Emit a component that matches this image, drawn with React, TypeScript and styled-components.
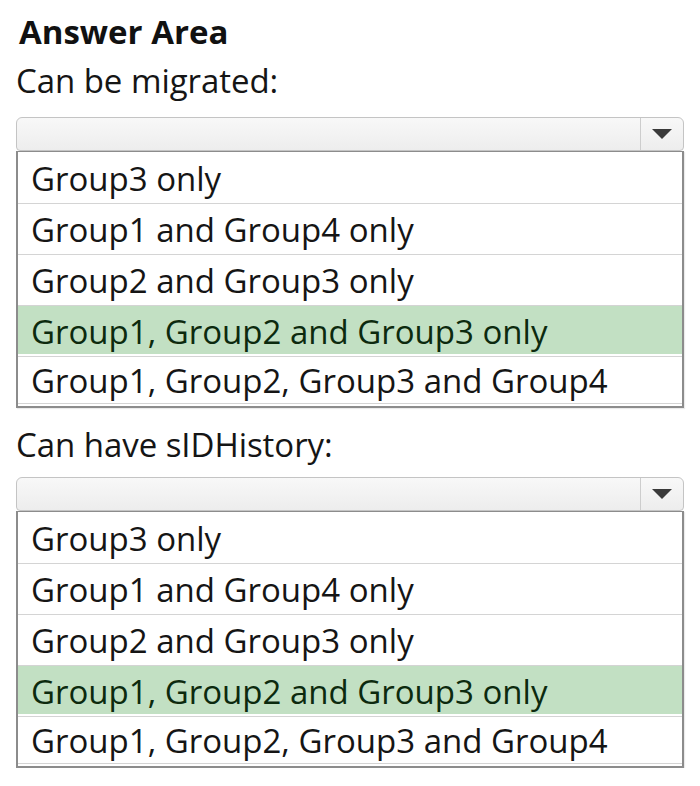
import React from "react";
import styled, { createGlobalStyle } from "styled-components";

const Global = createGlobalStyle`
  html, body {
    margin: 0;
    padding: 0;
    background: #ffffff;
  }
  body {
    font-family: "Open Sans", "Noto Sans", "Liberation Sans", sans-serif;
    color: #151515;
  }
`;

const Page = styled.div`
  width: 700px;
  padding: 12px 16px 0 16px;
  box-sizing: border-box;
`;

const Title = styled.h1`
  margin: 0 0 0 3px;
  font-size: 33px;
  line-height: 40px;
  font-weight: 700;
  color: #111;
  letter-spacing: 0;
`;

const Label = styled.div<{ $top: number }>`
  margin: ${(p) => p.$top}px 0 0 0;
  font-size: 33px;
  line-height: 42px;
  color: #151515;
  letter-spacing: -0.05px;
`;

const Select = styled.div<{ $top: number }>`
  margin-top: ${(p) => p.$top}px;
  width: 668px;
  height: 34px;
  box-sizing: border-box;
  border: 1px solid #c4c4c4;
  border-radius: 6px 6px 4px 4px;
  background: linear-gradient(#f8f8f8, #ededed);
  display: flex;
  justify-content: flex-end;
`;

const ArrowButton = styled.div`
  width: 42px;
  border-left: 1px solid #cdcdcd;
  display: flex;
  align-items: center;
  justify-content: center;
`;

const List = styled.ul`
  list-style: none;
  margin: 0;
  padding: 1px 0 2px 0;
  width: 668px;
  box-sizing: border-box;
  border: 2px solid #8c8c8c;
  border-top-width: 1px;
  background: #fff;
  box-shadow: 1px 1px 1px rgba(0, 0, 0, 0.08);
`;

const Option = styled.li<{ $selected?: boolean }>`
  height: 51px;
  box-sizing: border-box;
  padding-left: 13px;
  display: flex;
  align-items: center;
  font-size: 33px;
  letter-spacing: 0;
  border-bottom: 1px solid #d4d4d4;
  background: ${(p) => (p.$selected ? "#c2e0c3" : "#fff")};
  color: ${(p) => (p.$selected ? "#0c2a0e" : "#151515")};
  ${(p) => (p.$selected ? "box-shadow: inset 0 -2px 0 #fff;" : "")}

  &:last-child {
    height: 47px;
  }
`;

const options = [
  "Group3 only",
  "Group1 and Group4 only",
  "Group2 and Group3 only",
  "Group1, Group2 and Group3 only",
  "Group1, Group2, Group3 and Group4",
];

function Dropdown({ selected, top }: { selected: number; top: number }) {
  return (
    <>
      <Select $top={top}>
        <ArrowButton>
          <svg width="20" height="10" viewBox="0 0 20 10">
            <path d="M0 0 H20 L10 10 Z" fill="#3a3a3a" />
          </svg>
        </ArrowButton>
      </Select>
      <List>
        {options.map((o, i) => (
          <Option key={o} $selected={i === selected}>
            {o}
          </Option>
        ))}
      </List>
    </>
  );
}

export default function App() {
  return (
    <>
      <Global />
      <Page>
        <Title>Answer Area</Title>
        <section>
          <Label $top={8}>Can be migrated:</Label>
          <Dropdown selected={3} top={15} />
        </section>
        <section>
          <Label $top={16}>Can have sIDHistory:</Label>
          <Dropdown selected={3} top={11} />
        </section>
      </Page>
    </>
  );
}
